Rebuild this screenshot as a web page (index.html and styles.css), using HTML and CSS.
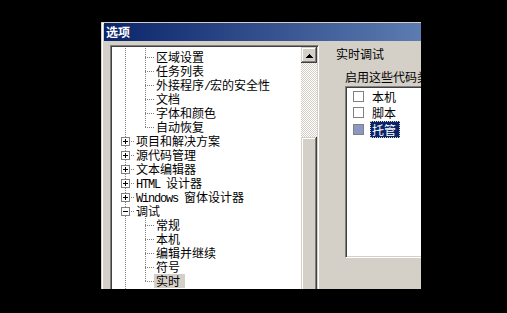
FILE: index.html
```html
<!DOCTYPE html>
<html>
<head>
<meta charset="utf-8">
<link rel="stylesheet" href="styles.css">
</head>
<body>
<div class="win">
  <div class="title">选项</div>
  <div class="main">
    <div class="tree">
      <div class="tree-content">
        <div class="row spacer"><i class="c v"></i><i class="c v"></i></div>
        <div class="row"><i class="c v"></i><i class="c t"></i><span class="lb">区域设置</span></div>
        <div class="row"><i class="c v"></i><i class="c t"></i><span class="lb">任务列表</span></div>
        <div class="row"><i class="c v"></i><i class="c t"></i><span class="lb">外接程序<span class="m">/</span>宏的安全性</span></div>
        <div class="row"><i class="c v"></i><i class="c t"></i><span class="lb">文档</span></div>
        <div class="row"><i class="c v"></i><i class="c t"></i><span class="lb">字体和颜色</span></div>
        <div class="row"><i class="c v"></i><i class="c l"></i><span class="lb">自动恢复</span></div>
        <div class="row"><i class="c t"><b class="box plus"></b></i><span class="lb">项目和解决方案</span></div>
        <div class="row"><i class="c t"><b class="box plus"></b></i><span class="lb">源代码管理</span></div>
        <div class="row"><i class="c t"><b class="box plus"></b></i><span class="lb">文本编辑器</span></div>
        <div class="row"><i class="c t"><b class="box plus"></b></i><span class="lb"><span class="m">HTML </span>设计器</span></div>
        <div class="row"><i class="c t"><b class="box plus"></b></i><span class="lb"><span class="m">Windows </span>窗体设计器</span></div>
        <div class="row"><i class="c t"><b class="box minus"></b></i><span class="lb">调试</span></div>
        <div class="row"><i class="c v"></i><i class="c t"></i><span class="lb">常规</span></div>
        <div class="row"><i class="c v"></i><i class="c t"></i><span class="lb">本机</span></div>
        <div class="row"><i class="c v"></i><i class="c t"></i><span class="lb">编辑并继续</span></div>
        <div class="row"><i class="c v"></i><i class="c t"></i><span class="lb">符号</span></div>
        <div class="row"><i class="c v"></i><i class="c l"></i><span class="lb sel">实时</span></div>
        <div class="row"><i class="c t"><b class="box plus"></b></i></div>
      </div>
      <div class="vscroll">
        <div class="sbtn"><svg width="7" height="4" viewBox="0 0 7 4"><rect x="3" y="0" width="1" height="1"/><rect x="2" y="1" width="3" height="1"/><rect x="1" y="2" width="5" height="1"/><rect x="0" y="3" width="7" height="1"/></svg></div>
        <div class="track"></div>
        <div class="thumb"></div>
      </div>
    </div>
    <div class="pane">
      <div class="hdr">实时调试</div>
      <div class="sub">启用这些代码类型的实时调试:</div>
      <div class="list">
        <div class="item"><span class="cb"></span><span class="it">本机</span></div>
        <div class="item"><span class="cb"></span><span class="it">脚本</span></div>
        <div class="item"><span class="cb on"></span><span class="it focus">托管</span></div>
      </div>
    </div>
  </div>
</div>
</body>
</html>
```
FILE: styles.css
```css
html, body {
  margin: 0;
  padding: 0;
}
body {
  background: #000;
  width: 507px;
  height: 313px;
  overflow: hidden;
  padding: 22px 0 0 101px;
  box-sizing: border-box;
  font-family: "Noto Sans CJK SC", sans-serif;
  font-size: 12px;
  color: #000;
}
.win {
  width: 320px;
  height: 267px;
  box-sizing: border-box;
  padding: 1px 0 0 3px;
  background: #d4d0c8;
  overflow: hidden;
  box-shadow: inset 1px 1px #d4d0c8, inset 2px 2px #fff;
  display: flex;
  flex-direction: column;
}
.title {
  flex: none;
  height: 18px;
  line-height: 18px;
  padding-left: 2px;
  color: #fff;
  font-weight: bold;
  font-size: 12px;
  background: linear-gradient(to right, #0a246a 0, #a6caf0 600px);
}
.main {
  display: flex;
  align-items: flex-start;
  margin-top: 4px;
  padding-left: 6px;
}
.tree {
  flex: none;
  width: 209px;
  height: 260px;
  box-sizing: border-box;
  border: 1px solid;
  border-color: #808080 #fff #fff #808080;
  padding: 1px;
  box-shadow: inset 1px 1px #404040, inset -1px -1px #d4d0c8;
  background: #fff;
  display: flex;
}
.tree-content {
  flex: 1;
  padding-left: 3px;
  overflow: hidden;
  white-space: nowrap;
}
.row {
  display: flex;
  height: 14px;
  line-height: 14px;
}
.row.spacer {
  height: 3px;
}
.c {
  display: block;
  flex: none;
  width: 20px;
  height: 14px;
}
.spacer .c {
  height: 3px;
}
.v {
  background: repeating-linear-gradient(#808080 0 1px, transparent 1px 2px) 10px 0 / 1px 100% no-repeat;
}
.spacer .v {
  background-position: 10px 1px;
}
.t {
  background:
    repeating-linear-gradient(to right, #808080 0 1px, transparent 1px 2px) 10px 7px / 10px 1px no-repeat,
    repeating-linear-gradient(#808080 0 1px, transparent 1px 2px) 10px 0 / 1px 100% no-repeat;
}
.l {
  background:
    repeating-linear-gradient(to right, #808080 0 1px, transparent 1px 2px) 10px 7px / 10px 1px no-repeat,
    repeating-linear-gradient(#808080 0 1px, transparent 1px 2px) 10px 0 / 1px 8px no-repeat;
}
.box {
  display: block;
  width: 9px;
  height: 9px;
  box-sizing: border-box;
  margin: 3px 0 0 6px;
  border: 1px solid #808080;
}
.box.plus {
  background:
    linear-gradient(#000, #000) center / 5px 1px no-repeat,
    linear-gradient(#000, #000) center / 1px 5px no-repeat,
    #fff;
}
.box.minus {
  background:
    linear-gradient(#000, #000) center / 5px 1px no-repeat,
    #fff;
}
.lb {
  display: block;
  height: 14px;
  padding-left: 1px;
}
.lb.sel {
  background: #d4d0c8;
  margin-left: -1px;
  padding: 0 5px 0 2px;
}
.m {
  font-family: "Liberation Mono", monospace;
  letter-spacing: -1.2px;
}
.vscroll {
  flex: none;
  width: 16px;
  display: flex;
  flex-direction: column;
}
.sbtn, .thumb {
  background: #d4d0c8;
  box-shadow: inset -1px -1px #404040, inset 1px 1px #d4d0c8, inset -2px -2px #808080, inset 2px 2px #fff;
}
.sbtn {
  flex: none;
  height: 16px;
  display: flex;
  align-items: center;
  justify-content: center;
}
.sbtn svg {
  display: block;
  margin-top: 2px;
  fill: #000;
  shape-rendering: crispEdges;
}
.track {
  flex: none;
  height: 74px;
  background: conic-gradient(#fff 0 25%, #d4d0c8 0 50%, #fff 0 75%, #d4d0c8 0) 0 0 / 2px 2px;
}
.thumb {
  flex: none;
  height: 200px;
}
.pane {
  flex: none;
  width: 200px;
  margin-left: 17px;
  white-space: nowrap;
}
.hdr {
  margin-top: 2px;
  line-height: 14px;
  height: 14px;
}
.sub {
  margin: 9px 0 0 9px;
  line-height: 14px;
  height: 14px;
}
.list {
  margin: 2px 0 0 9px;
  width: 180px;
  height: 172px;
  box-sizing: border-box;
  border: 1px solid;
  border-color: #808080 #fff #fff #808080;
  padding: 1px;
  box-shadow: inset 1px 1px #404040, inset -1px -1px #d4d0c8;
  background: #fff;
}
.item {
  display: flex;
  align-items: center;
  height: 16.5px;
}
.cb {
  flex: none;
  width: 11px;
  height: 11px;
  box-sizing: border-box;
  margin-left: 6px;
  border: 1px solid #808080;
  background: #fff;
}
.cb.on {
  background: #8b98c3;
}
.it {
  margin-left: 6px;
  padding: 0 4px 0 2px;
  height: 17px;
  line-height: 17px;
}
.it.focus {
  background: #0a246a;
  color: #fff;
  outline: 1px dotted #e0d8b0;
  outline-offset: -1px;
}
```
